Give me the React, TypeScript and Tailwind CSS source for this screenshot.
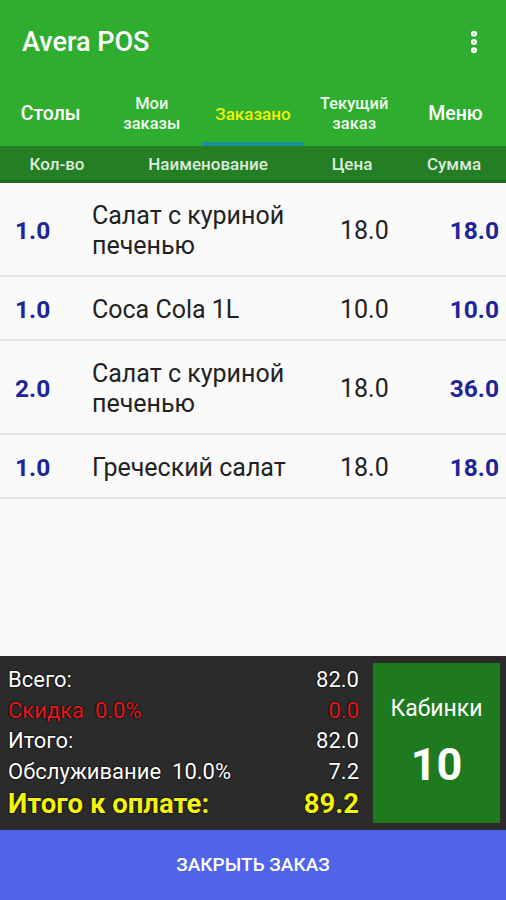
import { EllipsisVertical } from 'lucide-react';

const tabs = [
  { label: 'Столы', big: true },
  { label: 'Мои\nзаказы' },
  { label: 'Заказано', active: true },
  { label: 'Текущий\nзаказ' },
  { label: 'Меню', big: true },
];

const items = [
  { qty: '1.0', name: 'Салат с куриной печенью', price: '18.0', sum: '18.0' },
  { qty: '1.0', name: 'Coca Cola 1L', price: '10.0', sum: '10.0' },
  { qty: '2.0', name: 'Салат с куриной печенью', price: '18.0', sum: '36.0' },
  { qty: '1.0', name: 'Греческий салат', price: '18.0', sum: '18.0' },
];

const outline = '[text-shadow:0_0_2px_#000,0_0_1px_#000]';

const App = () => {
  return (
    <div className="w-[506px] h-[900px] flex flex-col bg-[#fafafa] overflow-hidden font-['Roboto',sans-serif]">
      <header className="bg-[#2fad2f]">
        <div className="h-[82px] flex items-center justify-between pl-[22px] pr-[18px] pt-[2px]">
          <h1 className="text-white text-[27px] font-medium">Avera POS</h1>
          <EllipsisVertical size={28} strokeWidth={3.2} className="text-white" />
        </div>
        <nav className="grid grid-cols-5 h-[64px]">
          {tabs.map((t) => (
            <div key={t.label} className="relative flex items-center justify-center text-center">
              <span
                className={`whitespace-pre-line font-medium leading-[20px] ${
                  t.active
                    ? 'text-[#ecf20c] text-[17px]'
                    : t.big
                      ? 'text-white text-[19.5px]'
                      : 'text-[#eef8ee] text-[16.5px]'
                }`}
              >
                {t.label}
              </span>
              {t.active && <div className="absolute bottom-0 inset-x-0 h-[4px] bg-[#16939a]" />}
            </div>
          ))}
        </nav>
      </header>

      <div className="h-[37px] pt-[3px] bg-[#247f24] border-b-[3px] border-[#196a19] grid grid-cols-[114px_188px_100px_104px] items-center text-[17px] font-medium text-[#dcebdc] text-center">
        <span>Кол-во</span>
        <span>Наименование</span>
        <span>Цена</span>
        <span>Сумма</span>
      </div>

      <div className="flex-1">
        {items.map((it, i) => (
          <div
            key={i}
            className="grid grid-cols-[92px_248px_100px_1fr] items-center pt-[18px] pb-[14px] border-b-2 border-[#e6e6e6] text-[25px] leading-[30px]"
          >
            <span className="pl-[15px] text-[24.5px] font-bold text-[#1e259c]">{it.qty}</span>
            <span className="text-[#222] pr-2">{it.name}</span>
            <span className="text-[#222]">{it.price}</span>
            <span className="text-right pr-[7px] text-[24.5px] font-bold text-[#1e259c]">{it.sum}</span>
          </div>
        ))}
      </div>

      <div className="h-[174px] bg-[#2b2b2b] flex items-stretch gap-[14px] pl-[8px] pr-[6px] pt-[7px] pb-[7px]">
        <div className={`flex-1 flex flex-col justify-center text-[22px] leading-[30.5px] ${outline}`}>
          <div className="flex justify-between text-white">
            <span>Всего:</span>
            <span>82.0</span>
          </div>
          <div className="flex justify-between text-[#e41b1b]">
            <span>Скидка&nbsp;&nbsp;0.0%</span>
            <span>0.0</span>
          </div>
          <div className="flex justify-between text-white">
            <span>Итого:</span>
            <span>82.0</span>
          </div>
          <div className="flex justify-between text-white">
            <span>Обслуживание&nbsp;&nbsp;10.0%</span>
            <span>7.2</span>
          </div>
          <div className="flex justify-between text-[#f4f40c] text-[27.5px] font-bold leading-[34px]">
            <span>Итого к оплате:</span>
            <span>89.2</span>
          </div>
        </div>
        <div className="w-[127px] bg-[#1f7a1f] flex flex-col items-center justify-center text-white">
          <span className="text-[23px] leading-[28px]">Кабинки</span>
          <span className="text-[45px] font-bold leading-[52px] mt-[16px]">10</span>
        </div>
      </div>

      <button className="h-[70px] bg-[#4f63eb] text-white text-[19px] font-medium">
        ЗАКРЫТЬ ЗАКАЗ
      </button>
    </div>
  );
};

export default App;
